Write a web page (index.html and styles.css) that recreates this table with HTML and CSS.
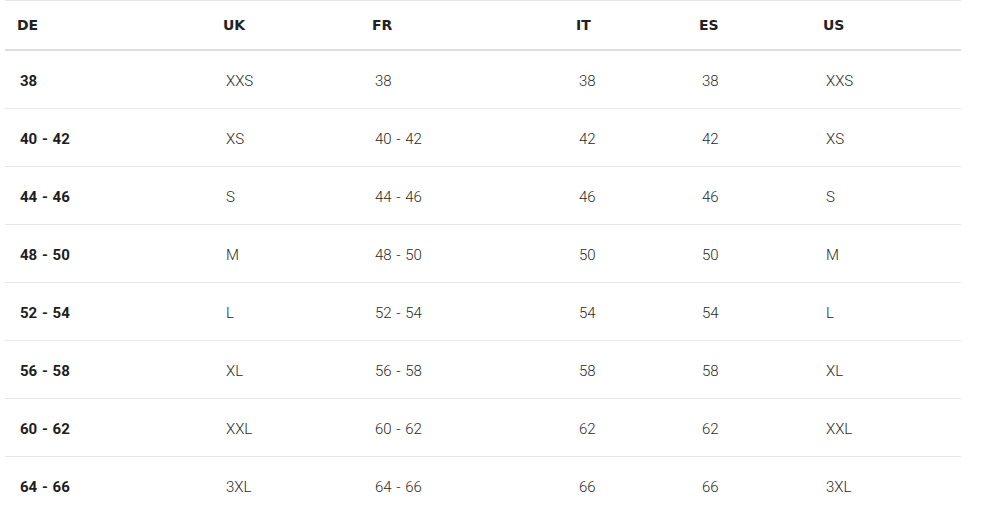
FILE: index.html
```html
<!DOCTYPE html>
<html lang="de">
<head>
<meta charset="utf-8">
<title>Größentabelle</title>
<link rel="stylesheet" href="styles.css">
</head>
<body>
<table class="size-table">
  <colgroup>
    <col class="c1"><col class="c2"><col class="c3"><col class="c4"><col class="c5"><col class="c6">
  </colgroup>
  <thead>
    <tr><th>DE</th><th>UK</th><th>FR</th><th>IT</th><th>ES</th><th>US</th></tr>
  </thead>
  <tbody>
    <tr><td class="key">38</td><td>XXS</td><td>38</td><td>38</td><td>38</td><td>XXS</td></tr>
    <tr><td class="key">40 - 42</td><td>XS</td><td>40 - 42</td><td>42</td><td>42</td><td>XS</td></tr>
    <tr><td class="key">44 - 46</td><td>S</td><td>44 - 46</td><td>46</td><td>46</td><td>S</td></tr>
    <tr><td class="key">48 - 50</td><td>M</td><td>48 - 50</td><td>50</td><td>50</td><td>M</td></tr>
    <tr><td class="key">52 - 54</td><td>L</td><td>52 - 54</td><td>54</td><td>54</td><td>L</td></tr>
    <tr><td class="key">56 - 58</td><td>XL</td><td>56 - 58</td><td>58</td><td>58</td><td>XL</td></tr>
    <tr><td class="key">60 - 62</td><td>XXL</td><td>60 - 62</td><td>62</td><td>62</td><td>XXL</td></tr>
    <tr class="last"><td class="key">64 - 66</td><td>3XL</td><td>64 - 66</td><td>66</td><td>66</td><td>3XL</td></tr>
  </tbody>
</table>
</body>
</html>
```
FILE: styles.css
```css
html, body {
  margin: 0;
  padding: 0;
  background: #fff;
}
body {
  padding-left: 5px;
}
.size-table {
  border-collapse: collapse;
  table-layout: fixed;
  width: 956px;
  border-top: 1px solid #e6e6e6;
}
.c1 { width: 206px; }
.c2 { width: 149px; }
.c3 { width: 204px; }
.c4 { width: 123px; }
.c5 { width: 124px; }
.c6 { width: 150px; }
.size-table th {
  height: 48px;
  padding: 0 0 0 12px;
  text-align: left;
  font-family: "DejaVu Sans", Verdana, sans-serif;
  font-weight: bold;
  font-size: 14px;
  color: #222;
  border-bottom: 2px solid #dedede;
  vertical-align: middle;
}
.size-table td {
  height: 55px;
  padding: 2px 0 0 15px;
  font-family: Roboto, "Liberation Sans", sans-serif;
  font-weight: 300;
  font-size: 15px;
  color: #2a2a2a;
  border-bottom: 1px solid #e6e6e6;
  vertical-align: middle;
  word-spacing: 1px;
}
.size-table td.key {
  font-weight: 700;
  font-size: 15px;
  color: #1e1e1e;
}
.size-table tr.last td {
  border-bottom: none;
}
```
